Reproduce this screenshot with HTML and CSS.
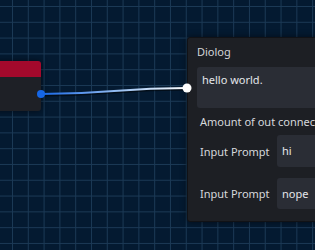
FILE: index.html
```html
<!DOCTYPE html>
<html lang="en">
<head>
  <meta charset="UTF-8">
  <meta name="viewport" content="width=device-width, initial-scale=1.0">
  <title>Graph Editor</title>
  <link rel="stylesheet" href="styles.css">
</head>
<body>
  <div class="canvas">
    <div class="node node-start">
      <div class="node-head"></div>
      <div class="node-body"></div>
    </div>

    <svg class="wires" width="315" height="250" viewBox="0 0 315 250">
      <defs>
        <linearGradient id="wireGrad" x1="41" y1="0" x2="187" y2="0" gradientUnits="userSpaceOnUse">
          <stop offset="0" stop-color="#1566e6"/>
          <stop offset="0.55" stop-color="#9cc2f2"/>
          <stop offset="1" stop-color="#ffffff"/>
        </linearGradient>
      </defs>
      <path d="M41 95 C 114 95, 114 89, 187 89" fill="none" stroke="#000" stroke-opacity="0.5" stroke-width="3"/>
      <path d="M41 94 C 114 94, 114 88, 187 88" fill="none" stroke="url(#wireGrad)" stroke-width="2"/>
      <circle cx="41" cy="94" r="4" fill="#1566e6"/>
      <circle cx="187" cy="88" r="4.5" fill="#ffffff"/>
    </svg>

    <div class="node node-dialog">
      <div class="dialog-title">Diolog</div>
      <div class="dialog-body">
        <div class="text-box">hello world.</div>
        <div class="field-label">Amount of out connections</div>
        <div class="prompt-row">
          <span class="prompt-label">Input Prompt</span>
          <div class="prompt-input">hi</div>
        </div>
        <div class="prompt-row">
          <span class="prompt-label">Input Prompt</span>
          <div class="prompt-input">nope</div>
        </div>
      </div>
    </div>
  </div>
</body>
</html>
```

FILE: styles.css
```css
body {
  margin: 0;
  font-family: 'Noto Sans', sans-serif;
  font-size: 11px;
  color: #d6d8dc;
  overflow: hidden;
}

.canvas {
  position: relative;
  width: 315px;
  height: 250px;
  overflow: hidden;
  background-color: #041a31;
  background-image:
    linear-gradient(to right, #1b3955 1px, transparent 1px),
    linear-gradient(to bottom, #1b3955 1px, transparent 1px);
  background-size: 15.8px 15.8px;
  background-position: 12px 6px;
}

.wires {
  position: absolute;
  left: 0;
  top: 0;
  z-index: 2;
}

.node {
  position: absolute;
  border-radius: 3px;
  box-shadow: 0 0 6px rgba(0, 0, 0, 0.55);
}

.node-start {
  left: -10px;
  top: 61px;
  width: 51px;
  z-index: 1;
}

.node-head {
  height: 16px;
  background: #a3092c;
  border-radius: 3px 3px 0 0;
}

.node-body {
  height: 34px;
  background: #1e2026;
  border-radius: 0 0 3px 3px;
}

.node-dialog {
  left: 187px;
  top: 37px;
  width: 160px;
  height: 185px;
  background: #1d1f24;
  border: 1px solid #111216;
  box-sizing: border-box;
  z-index: 1;
}

.dialog-title {
  height: 29px;
  padding-left: 9px;
  line-height: 27px;
  color: #d2d4d8;
}

.dialog-body {
  padding-left: 9px;
}

.text-box {
  height: 41px;
  padding: 5px 5px;
  box-sizing: border-box;
  background: #2a2d35;
  border-radius: 3px;
  line-height: 16px;
  color: #e4e6ea;
}

.field-label {
  margin-top: 5px;
  padding-left: 3px;
  line-height: 18px;
  white-space: nowrap;
}

.prompt-row {
  display: flex;
  align-items: center;
  gap: 7px;
  margin-top: 4px;
  padding-left: 3px;
}

.prompt-row + .prompt-row {
  margin-top: 11px;
}

.prompt-label {
  width: 70px;
  white-space: nowrap;
}

.prompt-input {
  flex: 1;
  height: 32px;
  padding-left: 5px;
  line-height: 32px;
  background: #2a2d35;
  border-radius: 3px 0 0 3px;
  color: #e4e6ea;
}

.prompt-row + .prompt-row .prompt-input {
  height: 31px;
  line-height: 31px;
}
```
